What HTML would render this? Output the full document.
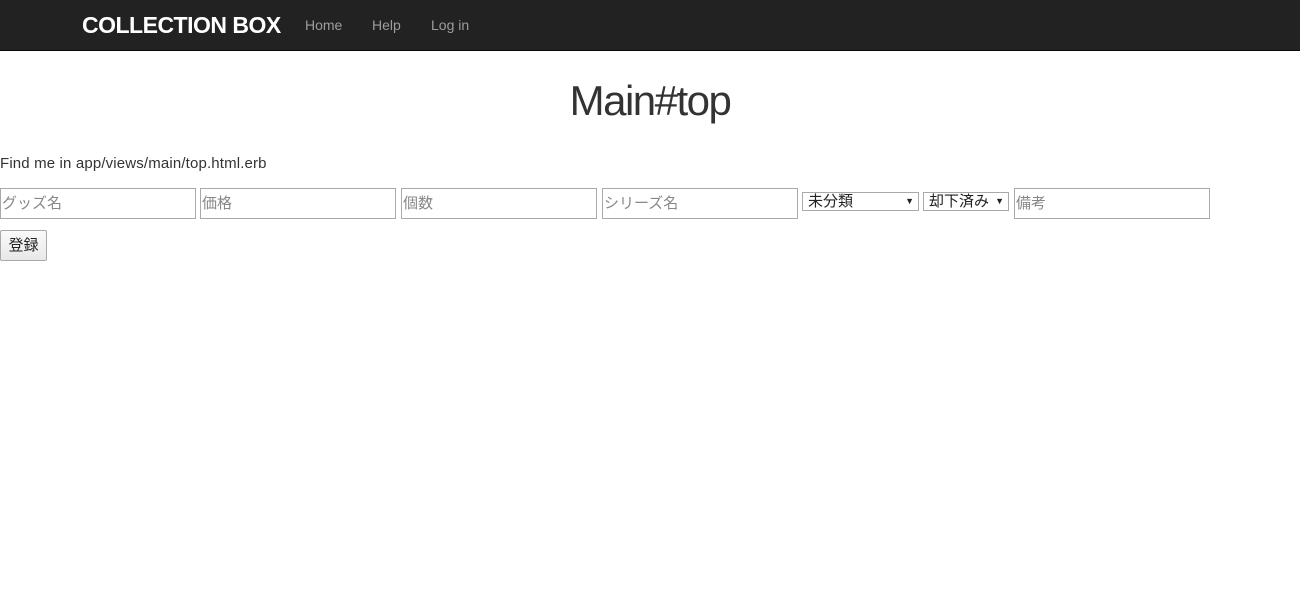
<!DOCTYPE html>
<html><head><meta charset="utf-8"><style>
body{margin:0;font-family:"Liberation Sans","Noto Sans CJK JP",sans-serif;color:#333;font-size:14px;background:#fff}
.nav{height:50px;background:#222;border-bottom:1px solid #080808;position:relative}
.logo{position:absolute;left:82px;top:12px;color:#fff;font-weight:bold;font-size:23px;letter-spacing:-0.5px}
.nav a{position:absolute;top:17px;color:#9d9d9d;font-size:14px;text-decoration:none}
h1{position:absolute;left:0;width:1300px;text-align:center;top:77px;margin:0;font-weight:normal;font-size:42px;letter-spacing:-1.5px}
.p{position:absolute;left:0;top:155px;font-size:15px;letter-spacing:0.15px}
.in{position:absolute;top:188px;border:1px solid #a9a9a9;box-sizing:border-box;height:31px;width:196px;color:#888;font-size:15px;line-height:29px;padding-left:1px}
.sel{position:absolute;top:192px;height:19px;border:1px solid #a9a9a9;box-sizing:border-box;font-size:15px;line-height:17px;padding-left:5px;color:#222}
.sel span{position:absolute;right:4px;top:0;font-size:9px}
.btn{position:absolute;left:0;top:230px;width:47px;height:31px;box-sizing:border-box;border:1px solid #a9a9a9;border-radius:2px;background:linear-gradient(#fafafa,#e8e8e8);font-size:15px;line-height:29px;text-align:center;color:#222}
</style></head><body>
<div class="nav"><div class="logo">COLLECTION BOX</div><a style="left:305px">Home</a><a style="left:372px">Help</a><a style="left:431px">Log in</a></div>
<h1>Main#top</h1>
<div class="p">Find me in app/views/main/top.html.erb</div>
<div class="in" style="left:0">グッズ名</div>
<div class="in" style="left:200px">価格</div>
<div class="in" style="left:401px">個数</div>
<div class="in" style="left:602px">シリーズ名</div>
<div class="sel" style="left:802px;width:117px">未分類<span>▼</span></div>
<div class="sel" style="left:923px;width:86px">却下済み<span>▼</span></div>
<div class="in" style="left:1014px">備考</div>
<div class="btn">登録</div>
</body></html>
